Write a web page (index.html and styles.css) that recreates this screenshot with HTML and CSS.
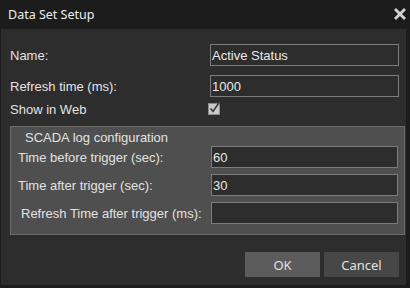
FILE: index.html
```html
<!DOCTYPE html>
<html lang="en">
<head>
  <meta charset="UTF-8" />
  <title>Data Set Setup</title>
  <link rel="stylesheet" href="styles.css">
</head>
<body>
  <div class="dialog">
    <div class="titlebar">
      <span class="title">Data Set Setup</span>
      <button class="close-btn" title="Close">
        <svg width="12" height="12" viewBox="0 0 12 12">
          <path d="M2 2 L10 10 M10 2 L2 10" stroke="#1a1a1a" stroke-width="4.2" stroke-linecap="square" />
          <path d="M2 2 L10 10 M10 2 L2 10" stroke="#d4d4d4" stroke-width="2.8" stroke-linecap="square" />
        </svg>
      </button>
    </div>

    <div class="content">
      <div class="row">
        <label class="label">Name:</label>
        <input class="field" type="text" value="Active Status" />
      </div>
      <div class="row">
        <label class="label">Refresh time (ms):</label>
        <input class="field" type="text" value="1000" />
      </div>
      <div class="row check-row">
        <label class="label">Show in Web</label>
        <span class="checkbox">
          <svg width="13" height="14" viewBox="0 0 13 14">
            <rect x="0.5" y="2.5" width="11" height="11" fill="#c9c9c9" stroke="#8c8c8c" />
            <path d="M2.5 7.5 L5 10.5 L11.5 1" fill="none" stroke="#3a3a3a" stroke-width="1.6" />
          </svg>
        </span>
      </div>

      <fieldset class="group">
        <div class="group-title">SCADA log configuration</div>
        <div class="row group-row">
          <label class="label">Time before trigger (sec):</label>
          <input class="field" type="text" value="60" />
        </div>
        <div class="row group-row">
          <label class="label">Time after trigger (sec):</label>
          <input class="field" type="text" value="30" />
        </div>
        <div class="row group-row">
          <label class="label indent">Refresh Time after trigger (ms):</label>
          <input class="field" type="text" value="" />
        </div>
      </fieldset>

      <div class="actions">
        <button class="btn btn-ok">OK</button>
        <button class="btn">Cancel</button>
      </div>
    </div>
  </div>
</body>
</html>
```

FILE: styles.css
```css
body {
  margin: 0;
  background: #151515;
  font-family: 'Liberation Sans', Arial, sans-serif;
  font-size: 13px;
  color: #e2e2e2;
}
.dialog {
  width: 410px;
  height: 288px;
  display: flex;
  flex-direction: column;
  background: #1c1c1c;
}
.titlebar {
  height: 29px;
  display: flex;
  align-items: center;
  justify-content: space-between;
  padding: 0 4px 0 8px;
  flex-shrink: 0;
}
.title {
  font-family: 'Noto Sans', sans-serif;
  font-size: 12.5px;
  color: #ececec;
  margin-top: -1px;
}
.close-btn {
  background: none;
  border: none;
  padding: 0;
  width: 12px;
  height: 12px;
  margin-top: -1px;
  cursor: pointer;
  display: flex;
}
.content {
  flex: 1;
  margin: 0 4px 3px 1px;
  background: #2d2d2d;
  padding: 15px 7px 0 9px;
  display: flex;
  flex-direction: column;
}
.row {
  display: flex;
  align-items: center;
  height: 22px;
  margin-bottom: 9px;
}
.label {
  width: 200px;
  flex-shrink: 0;
  white-space: nowrap;
}
.field {
  width: 193px;
  height: 22px;
  box-sizing: border-box;
  background: #2d2d2d;
  border: 1px solid #7c7c7c;
  color: #e8e8e8;
  font-family: 'Liberation Sans', Arial, sans-serif;
  font-size: 13px;
  padding: 0 2px 0 1px;
  outline: none;
}
.check-row {
  height: 12px;
  margin-top: -3px;
  margin-bottom: 0;
}
.checkbox {
  display: flex;
  margin-left: -2px;
  margin-top: -2px;
}
.group {
  margin: 11px 3px 0 0;
  padding: 3px 6px 10px 7px;
  background: #4f4f4f;
  border: 1px solid #6c6c6c;
  height: 109px;
  box-sizing: border-box;
}
.group-title {
  padding-left: 7px;
  height: 16px;
  line-height: 16px;
}
.group-row {
  margin-bottom: 6px;
}
.group-row .label {
  width: 193px;
}
.group-row .field {
  width: 187px;
}
.group-row:last-child {
  margin-bottom: 0;
}
.label.indent {
  padding-left: 3px;
  box-sizing: border-box;
}
.actions {
  display: flex;
  justify-content: flex-end;
  gap: 4px;
  margin-top: 17px;
}
.btn {
  width: 75px;
  height: 25px;
  border: none;
  background: #474747;
  color: #e0e0e0;
  font-family: 'Noto Sans', sans-serif;
  font-size: 13px;
  cursor: pointer;
}
.btn-ok {
  background: #5c5c5c;
}
.btn:hover {
  background: #656565;
}
```
